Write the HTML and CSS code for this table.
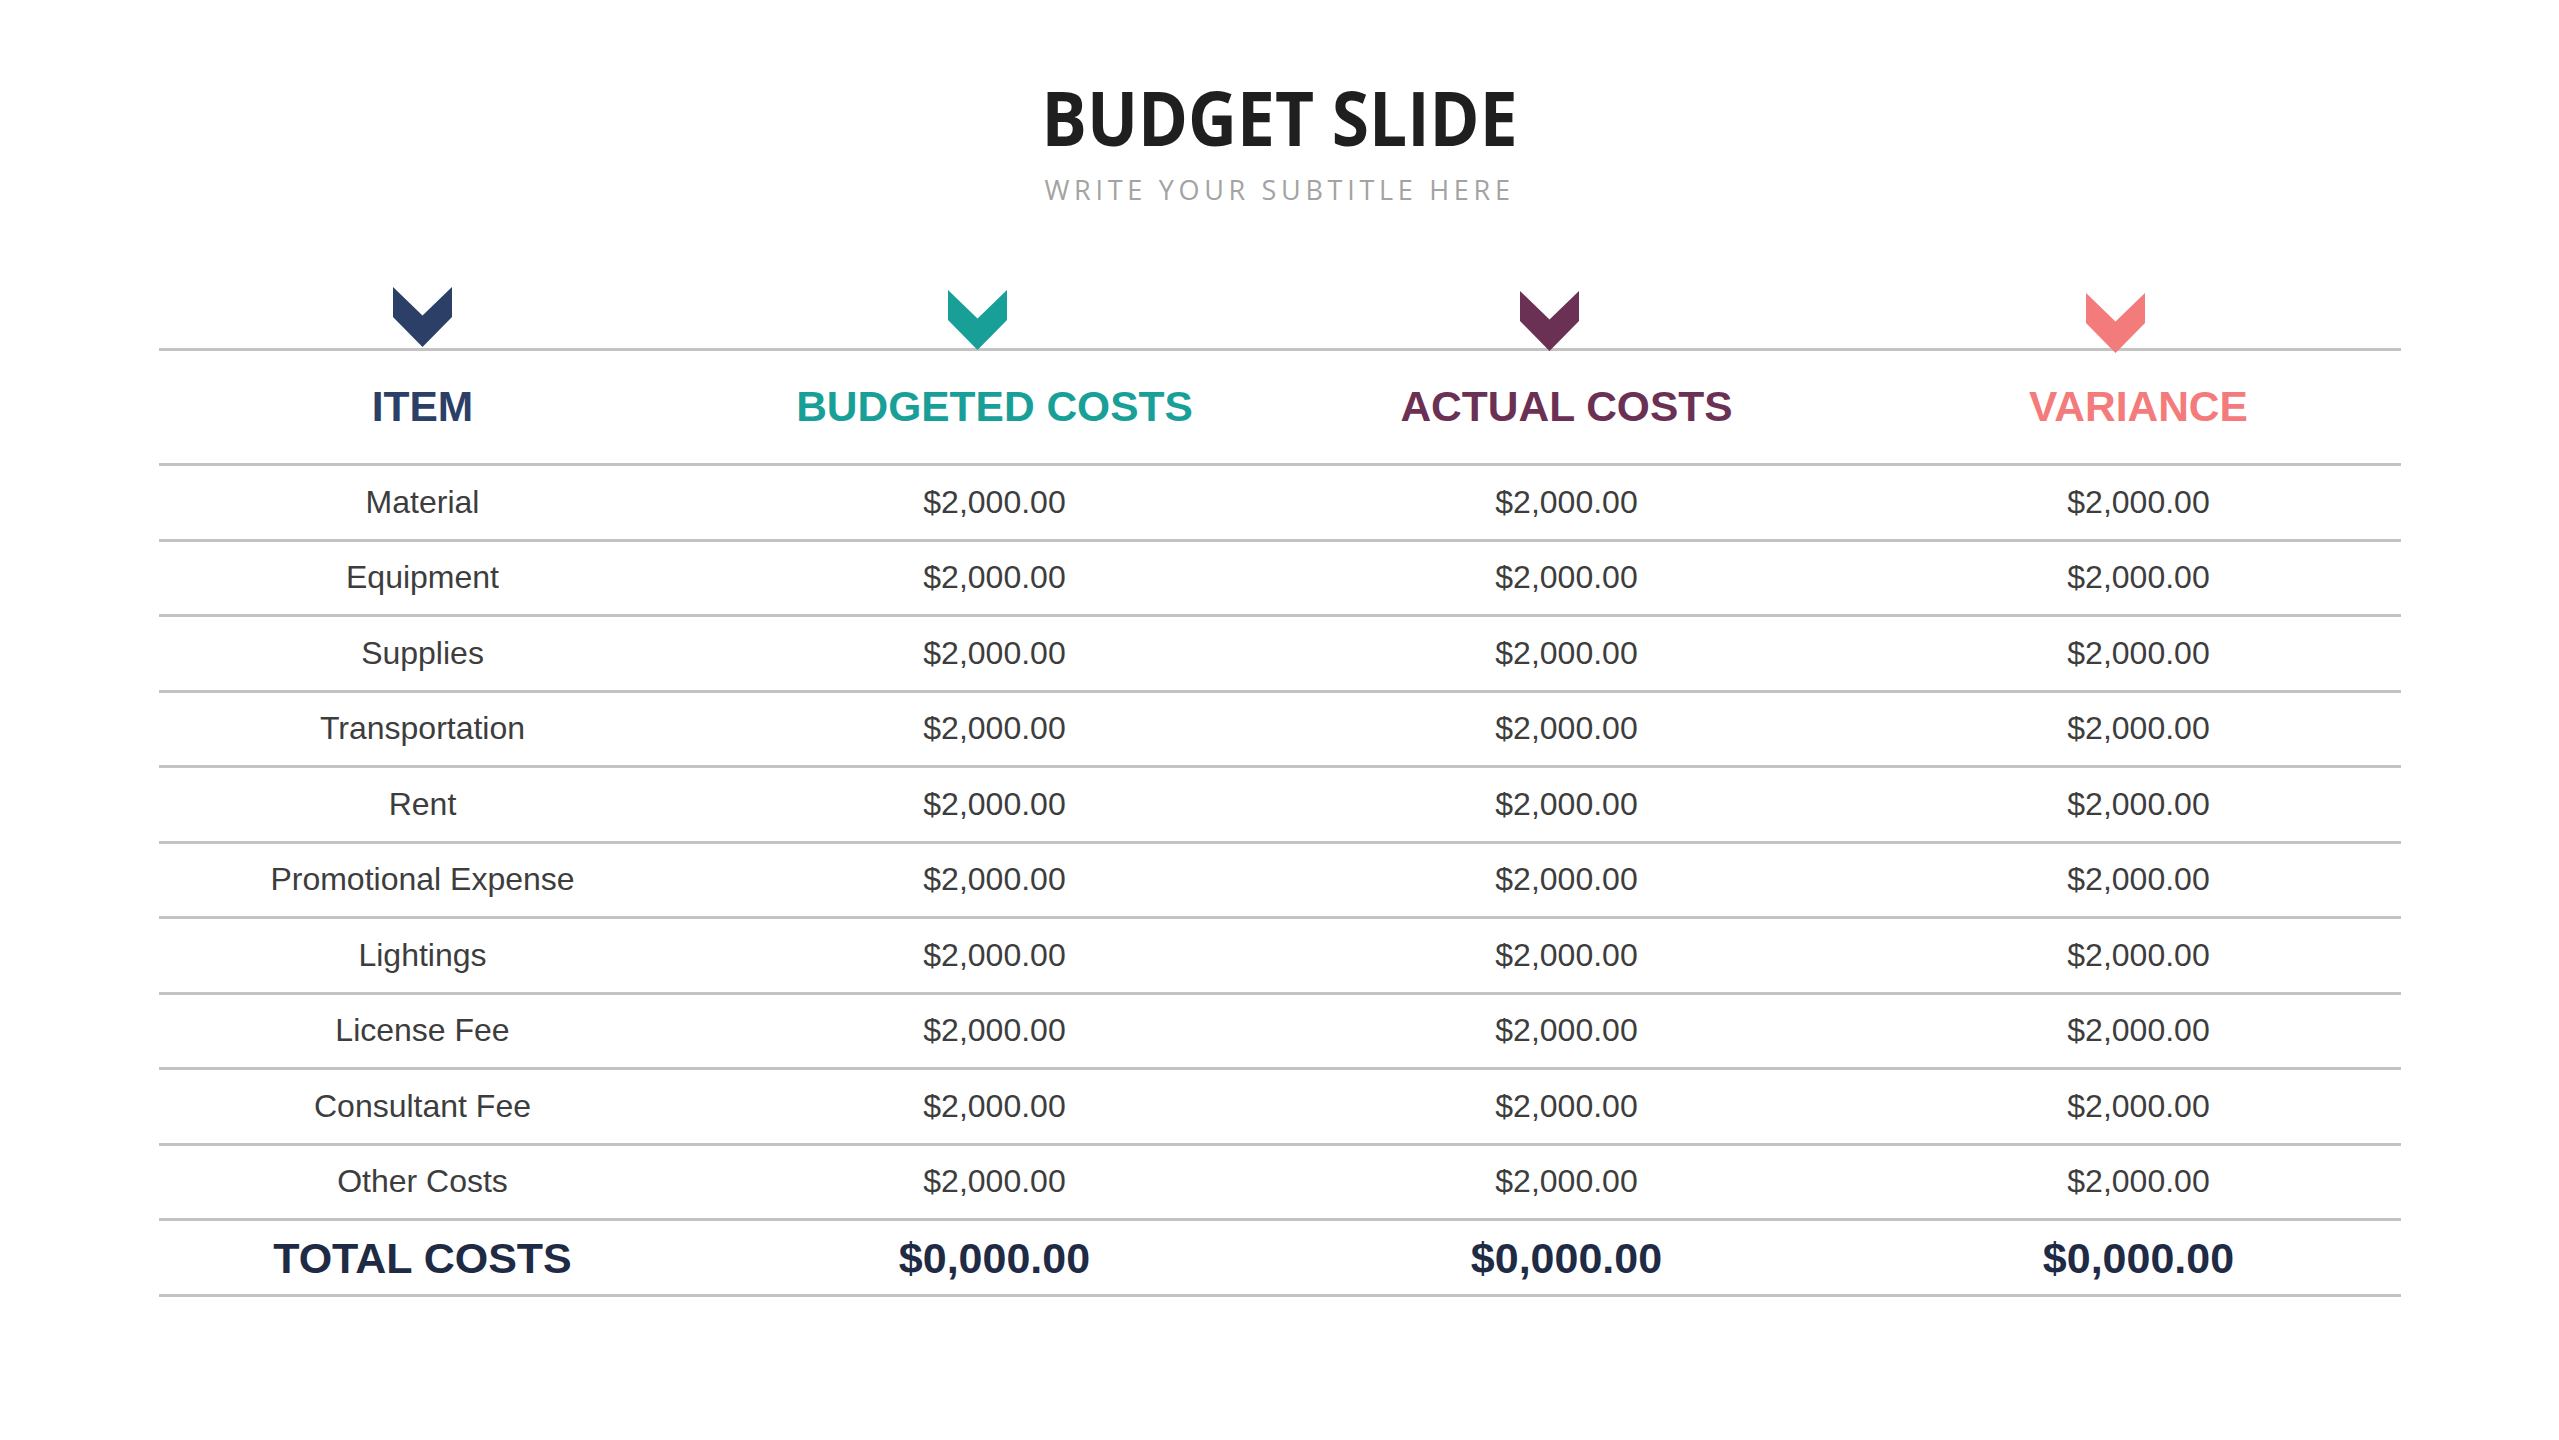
FILE: index.html
```html
<!DOCTYPE html>
<html lang="en">
<head>
<meta charset="utf-8">
<title>Budget Slide</title>
<link rel="stylesheet" href="styles.css">
</head>
<body>
<div class="slide">
  <header class="head">
    <h1 class="title">BUDGET SLIDE</h1>
    <p class="subtitle">WRITE YOUR SUBTITLE HERE</p>
  </header>

  <section class="budget">
    <div class="markers">
      <div class="mk mk-item"><svg viewBox="0 0 59 60"><polygon points="0,0 29.5,28.5 59,0 59,30 29.5,60 0,30"/></svg></div>
      <div class="mk mk-budget"><svg viewBox="0 0 59 60"><polygon points="0,0 29.5,28.5 59,0 59,30 29.5,60 0,30"/></svg></div>
      <div class="mk mk-actual"><svg viewBox="0 0 59 60"><polygon points="0,0 29.5,28.5 59,0 59,30 29.5,60 0,30"/></svg></div>
      <div class="mk mk-var"><svg viewBox="0 0 59 60"><polygon points="0,0 29.5,28.5 59,0 59,30 29.5,60 0,30"/></svg></div>
    </div>

    <div class="row row-head">
      <div class="cell c1 h-item">ITEM</div>
      <div class="cell c2 h-budget">BUDGETED COSTS</div>
      <div class="cell c3 h-actual">ACTUAL COSTS</div>
      <div class="cell c4 h-var">VARIANCE</div>
    </div>

    <div class="row"><div class="cell c1">Material</div><div class="cell c2">$2,000.00</div><div class="cell c3">$2,000.00</div><div class="cell c4">$2,000.00</div></div>
    <div class="row"><div class="cell c1">Equipment</div><div class="cell c2">$2,000.00</div><div class="cell c3">$2,000.00</div><div class="cell c4">$2,000.00</div></div>
    <div class="row"><div class="cell c1">Supplies</div><div class="cell c2">$2,000.00</div><div class="cell c3">$2,000.00</div><div class="cell c4">$2,000.00</div></div>
    <div class="row"><div class="cell c1">Transportation</div><div class="cell c2">$2,000.00</div><div class="cell c3">$2,000.00</div><div class="cell c4">$2,000.00</div></div>
    <div class="row"><div class="cell c1">Rent</div><div class="cell c2">$2,000.00</div><div class="cell c3">$2,000.00</div><div class="cell c4">$2,000.00</div></div>
    <div class="row"><div class="cell c1">Promotional Expense</div><div class="cell c2">$2,000.00</div><div class="cell c3">$2,000.00</div><div class="cell c4">$2,000.00</div></div>
    <div class="row"><div class="cell c1">Lightings</div><div class="cell c2">$2,000.00</div><div class="cell c3">$2,000.00</div><div class="cell c4">$2,000.00</div></div>
    <div class="row"><div class="cell c1">License Fee</div><div class="cell c2">$2,000.00</div><div class="cell c3">$2,000.00</div><div class="cell c4">$2,000.00</div></div>
    <div class="row"><div class="cell c1">Consultant Fee</div><div class="cell c2">$2,000.00</div><div class="cell c3">$2,000.00</div><div class="cell c4">$2,000.00</div></div>
    <div class="row"><div class="cell c1">Other Costs</div><div class="cell c2">$2,000.00</div><div class="cell c3">$2,000.00</div><div class="cell c4">$2,000.00</div></div>

    <div class="row row-total">
      <div class="cell c1">TOTAL COSTS</div>
      <div class="cell c2">$0,000.00</div>
      <div class="cell c3">$0,000.00</div>
      <div class="cell c4">$0,000.00</div>
    </div>
  </section>
</div>
</body>
</html>
```

FILE: styles.css
```css
html, body {
  margin: 0;
  padding: 0;
  background: #ffffff;
}

.slide {
  width: 2559px;
  height: 1440px;
  overflow: hidden;
  font-family: "Liberation Sans", Arial, sans-serif;
}

.head {
  padding-top: 79px;
  text-align: center;
}

.title {
  margin: 0;
  font-family: "Open Sans", "Liberation Sans", sans-serif;
  font-weight: 700;
  font-size: 76px;
  line-height: 76px;
  color: #1f1f1f;
  transform: scaleX(0.89);
}

.subtitle {
  margin: 21px 0 0;
  font-family: "Open Sans", "Liberation Sans", sans-serif;
  font-weight: 400;
  font-size: 27px;
  line-height: 28px;
  letter-spacing: 4.7px;
  color: #a3a3a3;
}

.budget {
  width: 2242px;
  margin: 83px auto 0;
}

.markers,
.row {
  display: grid;
  grid-template-columns: 550px 572px 572px 548px;
}

.markers {
  height: 62px;
  position: relative;
  z-index: 1;
}

.mk {
  justify-self: center;
  align-self: start;
  width: 59px;
  height: 60px;
}

.mk svg {
  display: block;
  width: 59px;
  height: 60px;
}

.mk-item { fill: #2b3f67; margin-right: 22px; }
.mk-budget { fill: #18a098; margin-right: 35px; margin-top: 3px; }
.mk-actual { fill: #6b3154; margin-right: 34px; margin-top: 4px; }
.mk-var { fill: #f47b7b; margin-left: 24px; margin-right: 46px; margin-top: 6px; }

.row {
  height: 72.5px;
  border-bottom: 3px solid #c3c3c3;
}

.row-head {
  height: 112px;
  border-top: 3px solid #c3c3c3;
  margin-top: -1px;
}

.cell {
  display: flex;
  align-items: center;
  justify-content: center;
  font-size: 32px;
  color: #3d3d3d;
  white-space: nowrap;
}

.c1 { padding-right: 22px; }
.c4 { padding-left: 24px; }

.row-head .cell {
  font-size: 42.5px;
  font-weight: 700;
}

.h-item { color: #2b3f67; }
.h-budget { color: #18a098; }
.h-actual { color: #6b3154; }
.h-var { color: #f47b7b; }

.row-total .cell {
  font-size: 43px;
  font-weight: 700;
  color: #1f2b45;
  padding-top: 2px;
}
```
